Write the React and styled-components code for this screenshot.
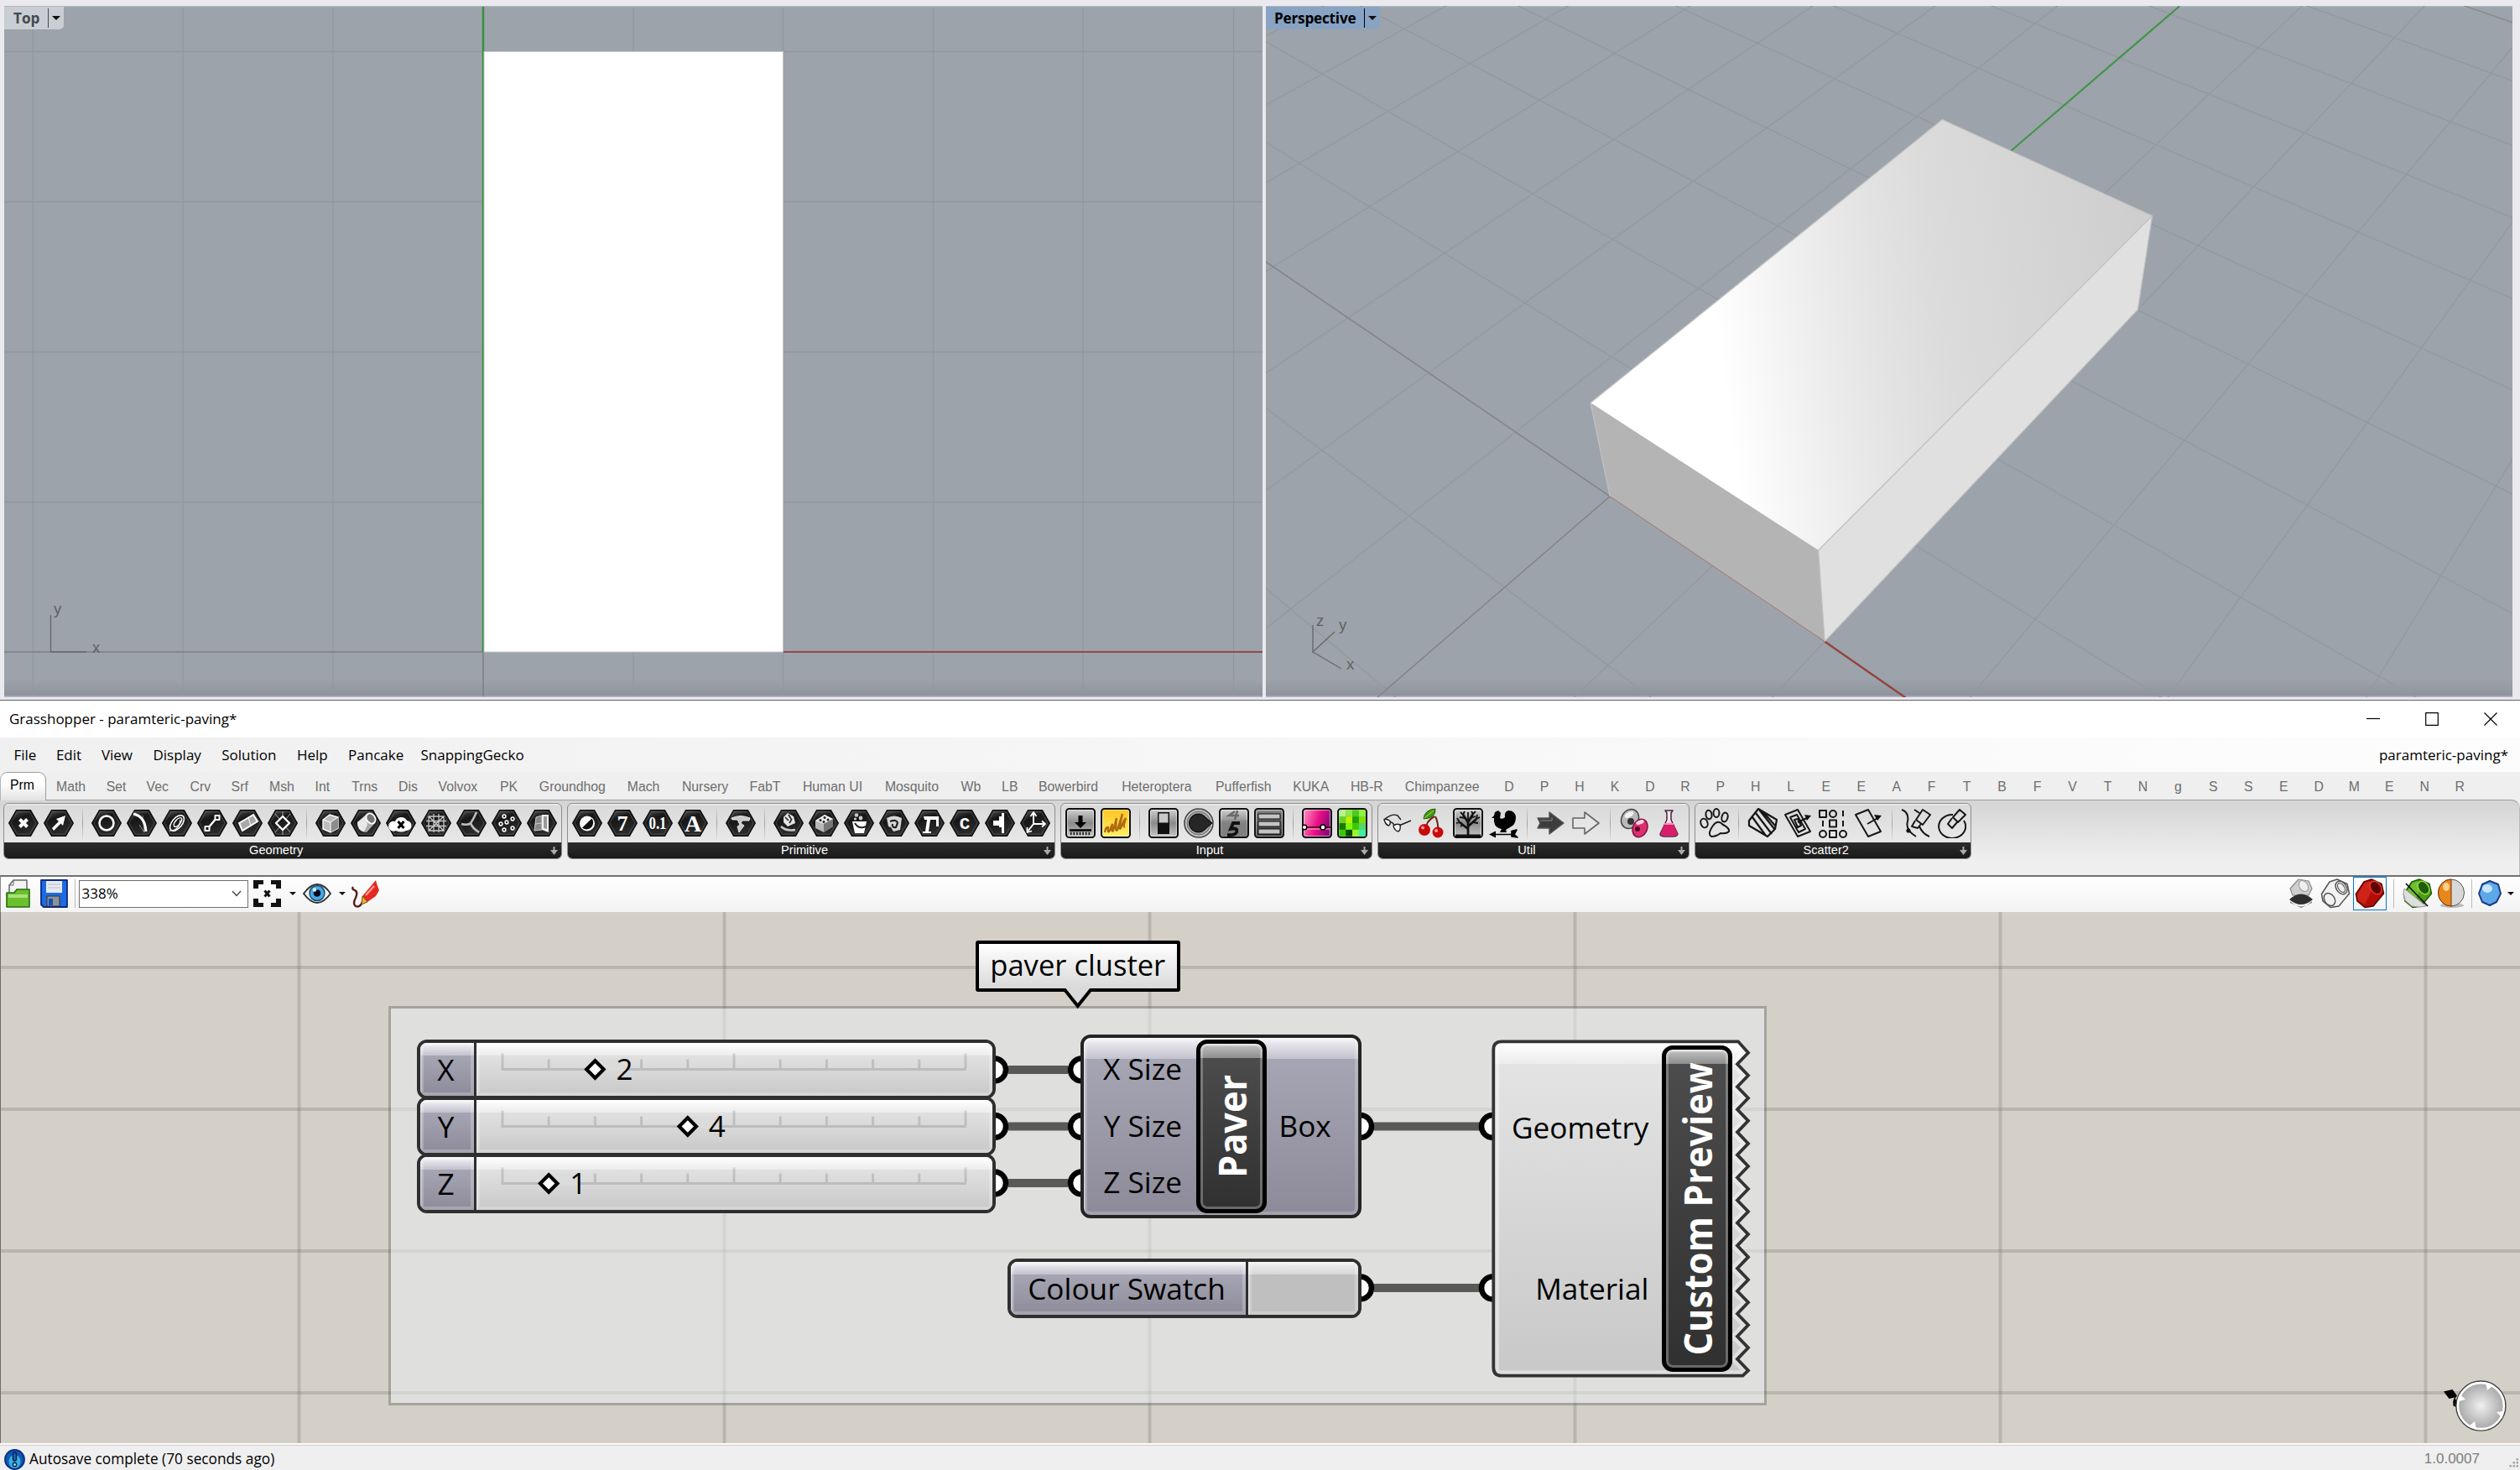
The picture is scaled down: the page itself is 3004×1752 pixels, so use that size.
import React from 'react';
import styled, { createGlobalStyle, css } from 'styled-components';

const UI = '"Open Sans", "Noto Sans", sans-serif';
const ARIAL = '"Liberation Sans", Arial, sans-serif';

const GlobalStyle = createGlobalStyle`
  html, body { margin: 0; padding: 0; }
  body { width: 3004px; height: 1752px; overflow: hidden; background: #efefef; font-family: ${UI}; }
  * { box-sizing: border-box; }
  svg { display: block; }
`;

const Page = styled.div`
  width: 3004px;
  height: 1752px;
  display: flex;
  flex-direction: column;
  overflow: hidden;
`;

/* ---------- Rhino viewports ---------- */
const Viewports = styled.div`
  height: 835px;
  flex: none;
  display: flex;
  gap: 4px;
  padding: 7px 9px 3px 5px;
  background: #e9e9ee;
  border-bottom: 1px solid #5e6063;
`;
const Viewport = styled.div`
  position: relative;
  width: ${(p) => p.$w}px;
  height: 824px;
  overflow: hidden;
  background: linear-gradient(#b9bec8 0, #9da3aa 2px, #9da3aa 802px, #8f949c 822px, #b4b8c4 823px);
`;
const ViewLabel = styled.div`
  position: absolute;
  left: 0;
  top: 1px;
  height: 27px;
  display: flex;
  align-items: center;
  border-radius: 0 0 5px 0;
  background: ${(p) => (p.$active ? '#88a3c3' : '#c9cdd4')};
  color: ${(p) => (p.$active ? '#000' : '#454a4e')};
  font: 700 17.2px/27px ${UI};
  letter-spacing: ${(p) => (p.$active ? '-0.22px' : '0')};
  padding: 0 4px 0 ${(p) => (p.$active ? 10 : 11)}px;
`;
const LabelDivider = styled.span`
  width: 1px;
  height: 23px;
  margin: 0 4px 0 9.5px;
  background: currentColor;
`;
const Caret = styled.span`
  width: 0;
  height: 0;
  border: ${(p) => p.$s || 5}px solid transparent;
  border-top-color: #111;
  border-bottom: 0;
`;
const AxisName = styled.span`
  position: absolute;
  left: ${(p) => p.$x}px;
  top: ${(p) => p.$y}px;
  font: 18.5px/20px ${ARIAL};
  color: #5d6165;
`;

const TopView = () => (
  <Viewport $w={1500}>
    <svg width="1500" height="824" viewBox="5 7 1500 824" fill="none">
      <g stroke="#9298a0" strokeWidth="1.3">
        {[39.5, 218, 397, 755, 933.5, 1112.5, 1291, 1470.5].map((x) => <path key={x} d={`M${x} 9V829`} />)}
        {[61.5, 240.5, 419.5, 598.5].map((y) => <path key={y} d={`M5 ${y}H1505`} />)}
      </g>
      <path d="M5 777H576M576 777V830" stroke="#7c8085" strokeWidth="1.5" />
      <path d="M576 8V777" stroke="#35903f" strokeWidth="2.5" />
      <path d="M933 777H1505" stroke="#93484a" strokeWidth="2.2" />
      <rect x="577" y="61.5" width="356.5" height="715.5" fill="#fff" stroke="#c4c6c9" strokeWidth="1" />
      <path d="M60.5 733V777H103" stroke="#666a6e" strokeWidth="1.4" />
    </svg>
    <ViewLabel>Top<LabelDivider /><Caret /></ViewLabel>
    <AxisName $x={59} $y={709}>y</AxisName>
    <AxisName $x={105} $y={755}>x</AxisName>
  </Viewport>
);

/* Maps a point of the construction plane to the perspective view. */
const project = (u, v) => {
  const a = -1 / 24.08;
  const b = 1 / 18.7;
  const w = 1 + a * u + b * v;
  return [
    (1919.1 - 903.3 * a * u + 4149 * b * v) / w,
    (591.5 - 1325 * a * u - 1327 * b * v) / w,
  ];
};
const line = (p, q) => `M${p[0].toFixed(1)} ${p[1].toFixed(1)}L${q[0].toFixed(1)} ${q[1].toFixed(1)}`;
const GRID = [];
for (let i = -9; i <= 9; i += 1) {
  if (i !== 0) {
    GRID.push(line(project(i, -9.5), project(i, 10)));
    GRID.push(line(project(-10, i), project(9, i)));
  }
}

const PerspectiveView = () => (
  <Viewport $w={1486}>
    <svg width="1486" height="824" viewBox="1509 7 1486 824" fill="none">
      <defs>
        <linearGradient id="topFace" gradientUnits="userSpaceOnUse" x1="2020" y1="400" x2="2560" y2="330">
          <stop offset="0" stopColor="#fff" />
          <stop offset="0.05" stopColor="#fff" />
          <stop offset="0.17" stopColor="#f5f5f5" />
          <stop offset="0.29" stopColor="#ebebeb" />
          <stop offset="0.42" stopColor="#e2e2e2" />
          <stop offset="0.55" stopColor="#dbdbdb" />
          <stop offset="1" stopColor="#cecece" />
        </linearGradient>
      </defs>
      <path d={GRID.join('')} stroke="#9298a0" strokeWidth="1.2" />
      <path d={line(project(-10, 10), project(9, 10))} stroke="#868a90" strokeWidth="1.3" />
      <path d="M1509 312L1919.1 591.5L1642 831" stroke="#84858b" strokeWidth="1.6" />
      <path d="M2397 180L2598 7.5" stroke="#43944a" strokeWidth="2.2" />
      <path d="M2175 764.5L2271.5 831.5" stroke="#93433f" strokeWidth="2.4" />
      <path d="M1896.1 480L2167.6 655.8L2175.2 764.5L1919.1 591.5Z" fill="#b4b4b4" />
      <path d="M2167.6 655.8L2565.6 257.2L2548.3 369.1L2175.2 764.5Z" fill="#e0e0e0" />
      <path d="M2315.3 142.5L2565.6 257.2L2167.6 655.8L1896.1 480Z" fill="url(#topFace)" />
      <path d="M1896.1 480L2315.3 142.5L2565.6 257.2L2167.6 655.8L2175.2 764.5M2565.6 257.2L2548.3 369.1L2175.2 764.5M1896.1 480L1919.1 591.5" stroke="#c0c1c2" strokeWidth="1.3" />
      <path d="M1919.1 591.5L2175.2 764.5" stroke="#a9625c" strokeOpacity=".75" strokeWidth="1" />
      <path d="M1565 745V777L1591 753M1565 777L1599 797" stroke="#666a6e" strokeWidth="1.4" />
    </svg>
    <ViewLabel $active>Perspective<LabelDivider /><Caret /></ViewLabel>
    <AxisName $x={60} $y={723}>z</AxisName>
    <AxisName $x={87} $y={728}>y</AxisName>
    <AxisName $x={96} $y={775}>x</AxisName>
  </Viewport>
);

/* ---------- window chrome ---------- */
const TitleBar = styled.div`
  height: 44px;
  flex: none;
  display: flex;
  align-items: center;
  justify-content: space-between;
  padding: 0 27px 0 11px;
  background: #fff;
  font: 17px/44px ${UI};
  color: #000;
`;
const WindowButtons = styled.div`
  display: flex;
  align-items: center;
  gap: 54px;
`;
const MenuBar = styled.div`
  height: 41px;
  flex: none;
  display: flex;
  align-items: center;
  padding: 1px 14px 0 16.5px;
  background: linear-gradient(90deg, #f0f0f0, #fcfcfc 90%);
  font: 17px/40px ${UI};
  color: #000;
`;
const MenuItem = styled.span`
  width: ${(p) => p.$w}px;
  white-space: nowrap;
`;
const MenuSpacer = styled.span`flex: 1;`;

const TabBar = styled.div`
  height: 33px;
  flex: none;
  display: flex;
  background: #efefef;
`;
const ActiveTab = styled.div`
  width: 55px;
  height: 34px;
  margin-bottom: -1px;
  padding-left: 11px;
  border: 1px solid #9c9c9c;
  border-bottom: 0;
  border-left-color: #b5b5b5;
  border-radius: 9px 9px 0 0;
  background: linear-gradient(#fff 40%, #e2e2e2);
  font: 15.8px/30px ${ARIAL};
  position: relative;
  z-index: 1;
`;
const Tab = styled.span`
  width: ${(p) => p.$w}px;
  text-align: ${(p) => (p.$center ? 'center' : 'left')};
  font: 15.8px/35px ${ARIAL};
  color: #6e6e6e;
  white-space: nowrap;
`;
const TabLead = styled.span`width: 12px;`;

const Ribbon = styled.div`
  height: 90px;
  flex: none;
  padding: 2.5px 3px 0 4px;
  display: flex;
  align-items: flex-start;
  gap: 5.6px;
  border-top: 1.5px solid #9d9d9d;
  border-right: 1.5px solid #b9b9b9;
  border-top-right-radius: 10px;
  background: linear-gradient(#d4d4d4, #efefef 80%);
`;
const Panel = styled.div`
  height: 67px;
  display: flex;
  flex-direction: column;
  border: 1px solid #8d8d8d;
  border-radius: 6px;
  overflow: hidden;
  background: linear-gradient(#f7f7f7 0, #dadada 2px, #e8e8e8 46px);
`;
const PanelIcons = styled.div`
  height: 46px;
  flex: none;
  display: flex;
  align-items: center;
  padding: 0 2.2px;
  svg { margin: 0 3px; }
`;
const PanelSep = styled.span`
  width: 1.2px;
  height: 40px;
  margin: 0 6.9px;
  background: linear-gradient(#d8d8d8, #a4a4a4 50%, #dedede);
`;
const PanelTitle = styled.div`
  flex: 1;
  position: relative;
  padding-right: 16px;
  text-align: center;
  background: linear-gradient(#2c2c2c, #191919);
  color: #fff;
  font: 14.6px/18px ${ARIAL};
  svg { position: absolute; right: 3px; top: 5px; }
`;

/* ---------- toolbar ---------- */
const Toolbar = styled.div`
  height: 44px;
  flex: none;
  display: flex;
  align-items: center;
  padding: 0 3px 2px 6px;
  border-top: 2px solid #717171;
  border-left: 1px solid #8a8a8a;
  background: linear-gradient(#fefefe, #f3f3f3);
`;
const Gap = styled.span`width: ${(p) => p.$w}px; flex: none;`;
const ToolSep = styled.span`width: 1px; height: 34px; background: #bcbcbc;`;
const ZoomBox = styled.div`
  width: 202px;
  height: 33px;
  display: flex;
  align-items: center;
  justify-content: space-between;
  padding: 0 7px 0 3px;
  border: 1px solid #707070;
  background: #fff;
  font: 17px/30px ${UI};
`;
const Pressed = styled.span`
  width: 40px;
  height: 40px;
  display: flex;
  align-items: center;
  justify-content: center;
  border: 1px solid #0078d7;
`;
const ToolSpring = styled.span`flex: 1;`;

/* ---------- canvas ---------- */
const Canvas = styled.div`
  position: relative;
  height: 633px;
  flex: none;
  overflow: hidden;
  background: #d4d0c8;
  border-left: 1px solid #6e6e6e;
`;
const Backdrop = styled.svg`
  position: absolute;
  left: -1px;
  top: 0;
`;
const at = css`
  position: absolute;
  left: ${(p) => p.$x - 1}px;
  top: ${(p) => p.$y - 1087}px;
  width: ${(p) => p.$w}px;
  height: ${(p) => p.$h}px;
`;
const Group = styled.div`
  ${at}
  border: 3.5px solid rgba(92, 94, 92, 0.4);
  background: rgba(231, 237, 238, 0.55);
  background-clip: padding-box;
`;
const SKIN = {
  mauve: ['#f4f3f8', '#c3c2cd', '#a6a5b3', '#8d8b99'],
  silver: ['#ffffff', '#ececec', '#e1e1e1', '#c8c8c8'],
  black: ['#c4c4c4', '#8e8e8e', '#4c4c4c', '#303030'],
  swatch: ['#efefef', '#d8d8d8', '#bfbfbf', '#bfbfbf'],
};
const skin = (name, gloss) => {
  const [a, b, c, d] = SKIN[name];
  return `linear-gradient(${a} 0, ${b} ${gloss}px, ${c} ${gloss}px, ${d} 100%)`;
};
const Capsule = styled.div`
  ${at}
  display: flex;
  border: 4px solid #2f2f2f;
  border-radius: 12px;
  overflow: hidden;
`;
const Cell = styled.div`
  width: ${(p) => (p.$w ? `${p.$w}px` : 'auto')};
  flex: ${(p) => (p.$w ? 'none' : 1)};
  display: flex;
  align-items: center;
  justify-content: center;
  padding: 0 3px 1px 0;
  border-left: ${(p) => (p.$divided ? '3.5px solid #2f2f2f' : '0')};
  background: ${(p) => skin(p.$skin, p.$gloss)};
  box-shadow: inset 0 0 0 4px rgba(255, 255, 255, 0.22), inset 1.5px 1.5px 0 rgba(255, 255, 255, 0.45);
  font: 35.200px/40px ${UI};
  color: #000;
  white-space: nowrap;
`;
const Track = styled.div`
  flex: 1;
  border-left: 3.5px solid #2f2f2f;
  background: ${skin('silver', 15)};
  box-shadow: inset 0 0 0 4px rgba(255, 255, 255, 0.22), inset 1.5px 1.5px 0 rgba(255, 255, 255, 0.45);
`;
const PortColumn = styled.div`
  display: flex;
  flex: none;
  flex-direction: column;
  justify-content: ${(p) => p.$justify || 'center'};
  align-items: flex-end;
  padding: ${(p) => p.$pad};
  font: 35.2px/${(p) => p.$lh}px ${UI};
  color: #000;
  white-space: nowrap;
`;
const ComponentBody = styled.div`
  ${at}
  display: flex;
  border: ${(p) => (p.$bare ? '0' : '4px solid #242424')};
  border-radius: 12px;
  background: ${(p) => (p.$bare ? 'none' : skin('mauve', 25))};
  box-shadow: ${(p) => (p.$bare ? 'none' : 'inset 0 0 0 4px rgba(255,255,255,.2), inset 1.5px 1.5px 0 rgba(255,255,255,.5)')};
`;
const NamePlate = styled.div`
  width: ${(p) => p.$w}px;
  height: ${(p) => p.$h}px;
  margin: ${(p) => p.$m};
  flex: none;
  display: flex;
  align-items: center;
  justify-content: center;
  border: 5px solid #000;
  border-radius: 13px;
  background: ${skin('black', 17)};
  box-shadow: inset 0 0 0 3px rgba(255, 255, 255, 0.28), inset 0 1.5px 0 rgba(255, 255, 255, 0.6);
  span {
    writing-mode: vertical-rl;
    transform: rotate(180deg) scaleY(0.94);
    font: 700 46px/60px ${UI};
    color: #fff;
    white-space: nowrap;
    text-align: center;
  }
`;
const Note = styled.div`
  ${at}
  display: flex;
  align-items: center;
  justify-content: center;
  padding-bottom: 4px;
  border: 4px solid #000;
  border-radius: 3px;
  background: linear-gradient(#fff, #d9d9d9);
  font: 34.6px/50px ${UI};
  color: #000;
`;

const SliderRow = ({ y, label, value }) => {
  const x0 = 600;
  const step = 55.2;
  const knob = x0 + value * step;
  return (
    <Capsule $x={497} $y={y} $w={689.5} $h={71}>
      <Cell $w={64} $skin="mauve" $gloss={15}>{label}</Cell>
      <Track>
        <svg width="614" height="63" viewBox="569 -31.5 614 63">
          <g stroke="#000" strokeOpacity="0.13" strokeWidth="3" fill="none">
            <path d="M598.5 0H1153" />
            {Array.from({ length: 11 }, (_, i) => (
              <path key={i} d={`M${x0 + i * step} ${i % 5 === 0 ? -19 : -12}V-1.5`} />
            ))}
          </g>
          <rect x={knob - 9} y="-12" width="46" height="14" fill="#dbdbdb" />
          <path d={`M${knob} -10.2L${knob + 10.2} 0L${knob} 10.2L${knob - 10.2} 0Z`} fill="#fff" stroke="#000" strokeWidth="4.2" />
          <text x={knob + 25} y="12" fontFamily='"Open Sans", sans-serif' fontSize="35">{value}</text>
        </svg>
      </Track>
    </Capsule>
  );
};

const Grips = ({ points }) => points.map(([x, y]) => (
  <circle key={`${x}-${y}`} cx={x} cy={y} r="13.5" fill="#fff" stroke="#000" strokeWidth="6.5" />
));

const zig = () => {
  let d = 'M1790 1241.3H2072L2084 1254.7';
  for (let i = 0; i < 14; i += 1) {
    const y = 1254.7 + i * 27.05;
    d += `L2071 ${y + 13.5}L2084 ${y + 27.05}`;
  }
  return `${d}L2077.5 1639.7H1790Q1780.3 1639.7 1780.3 1630V1251Q1780.3 1241.3 1790 1241.3Z`;
};

/* ---------- icons ---------- */
const HEX = 'M9.5 2.6H26.5L35.4 18L26.5 33.4H9.5L.6 18Z';
const W = { stroke: '#fff', fill: 'none', strokeWidth: 2, strokeLinejoin: 'round' };
const G = {
  point: <path d="M13.500 13.500L22.500 22.500M22.500 13.500L13.500 22.500" {...W} strokeWidth="4" />,
  vector: <path d="M12 27L10 24L18 16L15 13L26 9L23 21L20.5 18.5Z" fill="#fff" />,
  circle: <circle cx="18" cy="18" r="8.5" {...W} strokeWidth="2.6" />,
  arc: <><path d="M8 7Q22 10 23 28" {...W} strokeWidth="3" /><path d="M15 20L21 29L19 9" {...W} strokeWidth=".8" strokeOpacity=".6" /></>,
  curve: <><ellipse cx="18" cy="18" rx="11" ry="6" transform="rotate(-50 18 18)" {...W} strokeWidth="1.5" /><ellipse cx="19" cy="17" rx="6.5" ry="3" transform="rotate(-50 19 17)" {...W} strokeWidth="1.5" /><path d="M9 27Q21 27 22 14" {...W} strokeWidth="1.2" /></>,
  line: <><path d="M13 24L23 12" {...W} strokeWidth="2.4" /><path d="M9.5 22h5v5h-5zM21.500 9h5v5h-5z" {...W} fill="#111" /></>,
  plane: <><path d="M8 18L25 8L30 16L12 27Z" fill="#a9a9a9" stroke="#fff" strokeWidth="2" /><path d="M19 11.500L22 21" stroke="#fff" /></>,
  mesh2: <><path d="M18 10L26 18L18 26L10 18Z" {...W} strokeWidth="2.4" /><path d="M9 7L14 13M27 7L22 13M9 29L14 23M27 29L22 23M18 4V9M18 27V32" stroke="#aaa" /></>,
  box: <><path d="M9 14L17 8L27 11V24L18 29L9 25Z" fill="#bdbdbd" stroke="#fff" strokeWidth="1.400" /><path d="M18 17L27 11V24L18 29Z" fill="#8d8d8d" /><path d="M9 14L18 17L27 11M18 17V29" stroke="#fff" fill="none" /></>,
  tube: <><path d="M8 17L19 7Q29 9 29 18L19 29Q8 28 8 17Z" fill="#a9a9a9" /><path d="M8 17L18 9L20 20L16 28.500Q8 27 8 17Z" fill="#e8e8e8" /><ellipse cx="24" cy="12.500" rx="5" ry="6.500" transform="rotate(-35 24 12.500)" fill="#777" stroke="#fff" strokeWidth="1.800" /></>,
  cloud: <><path d="M12 27A6 6 0 1 1 11 16A7.500 7 0 0 1 25 15A6 6 0 1 1 24 27Q18 30 12 27Z" fill="#fff" /><path d="M14.500 16L21.500 24M21.500 16L14.500 24" stroke="#000" strokeWidth="3" /></>,
  mesh: <><path d="M9 10H27V27H9ZM15 7V29M21 7V29M6 15.500H30M6 21.500H30M9 10L27 27M27 10L9 27" {...W} strokeWidth="1.300" strokeOpacity=".75" /></>,
  subd: <path d="M6 19Q14 21 17 18Q20 14 24 5M17 18Q19 24 27 29" {...W} strokeWidth="2.600" strokeOpacity=".7" />,
  field: <g {...W} strokeWidth="1.500">{[[15, 10], [25, 13], [11, 19], [18, 17], [25, 24], [15, 26]].map(([x, y]) => <circle key={`${x}${y}`} cx={x} cy={y} r="1.900" />)}</g>,
  brep: <><path d="M9 27L11 11L18 9V26Z" fill="#888" stroke="#ccc" /><path d="M18 8H26V29L18 26Z" fill="#eee" /><path d="M10 19L18 18" stroke="#ccc" /><path d="M20 10H24V25L20 24Z" fill="#999" /></>,
  bool: <><circle cx="18" cy="18.500" r="9" fill="#fff" /><path d="M23.500 12.500A8 8 0 0 1 12 23.500Z" fill="#111" /></>,
  pulse: <path d="M7 12Q18 7 29 12L28 15H20L18 18L22 21L16 29L14 22L17 20L14 14H8Z" fill="#c9c9c9" stroke="#fff" strokeWidth=".8" />,
  guid: <><path d="M12 11L17 6L24 10L26 18L17 22L12 17Z" fill="#e4e4e4" /><path d="M14 11L18 15M18 8L21 13M22 13L19 18" stroke="#222" strokeWidth="1.600" /><path d="M9 22Q15 28 26 26" {...W} strokeWidth="2.600" strokeOpacity=".75" /></>,
  dice: <><path d="M8 15L19 8L29 13V22L18 29L8 24Z" fill="#b8b8b8" /><path d="M8 15L19 8L29 13L18 19Z" fill="#eee" /><path d="M18 19L29 13V22L18 29Z" fill="#777" /><g fill="#222"><circle cx="14" cy="14.500" r="1.500" /><circle cx="19" cy="11.500" r="1.500" /><circle cx="23" cy="14" r="1.500" /><circle cx="18" cy="16.500" r="1.500" /></g></>,
  bucket: <><path d="M10 16H27L24 30H13Z" fill="#fff" /><path d="M13 18Q18 26 26 22" stroke="#222" strokeWidth="2" fill="none" /><g fill="#ccc"><circle cx="15" cy="8.500" r="2.200" /><circle cx="20" cy="12" r="2.400" /><circle cx="13.500" cy="13" r="1.600" /></g></>,
  path: <><path d="M9 12Q18 7 27 12L25 26L17 28L14 23L11 22Z" fill="#d6d6d6" /><path d="M13 16Q21 13 22 18L20 23Q15 24 16 19" stroke="#222" strokeWidth="2.200" fill="none" /></>,
  shader: <path d="M11 10H29V22H26V14H19L17 28H20V30H10V28H13L15 14H12Z" fill="#fff" />,
  transform: <path d="M10 15H17V10H20V6H23V30H20V23H17V21H10Z" fill="#fff" />,
  axes: <><path d="M16 6V19L9 28M16 19H29" {...W} /><path d="M12.500 10L16 5L19.500 10M26 15.500L30 19L26 22.500M8.500 23V29L14 27.500" {...W} strokeWidth="1.800" /></>,
};
const LETTER = { seven: ['7', 26, 26.5], num: ['0.1', 21, 25], text: ['A', 28, 27.5], cult: ['C', 21, 25] };

const Hex = ({ g }) => (
  <svg width="36" height="36" viewBox="0 0 36 36">
    <defs>
      <linearGradient id="hexFill" x1="0" y1="0" x2=".4" y2="1">
        <stop offset="0" stopColor="#585858" /><stop offset=".4" stopColor="#161616" /><stop offset="1" stopColor="#2c2c2c" />
      </linearGradient>
    </defs>
    <path d={HEX} fill="url(#hexFill)" stroke="#0b0b0b" strokeWidth="1.200" strokeLinejoin="round" />
    <path d="M10.600 4.800H25.400L33 18L25.400 31.200H10.600L3 18Z" fill="none" stroke="#777" strokeOpacity=".45" strokeWidth="1" />
    {G[g]}
    {LETTER[g] && (
      <text
        x="18" y={LETTER[g][2]} textAnchor="middle" fill="#fff" fontSize={LETTER[g][1]} fontWeight="700"
        fontFamily={g === 'cult' ? '"Liberation Mono", monospace' : '"Liberation Serif", serif'}
        textLength={g === 'num' ? 21 : undefined} lengthAdjust="spacingAndGlyphs"
      >
        {LETTER[g][0]}
      </text>
    )}
  </svg>
);

const Square = ({ fill = 'url(#sqFill)', children }) => (
  <svg width="36" height="36" viewBox="0 0 36 36">
    <defs>
      <linearGradient id="sqFill" x1="0" y1="0" x2="0" y2="1"><stop offset="0" stopColor="#d2d2d2" /><stop offset=".5" stopColor="#8a8a8a" /><stop offset="1" stopColor="#c8c8c8" /></linearGradient>
      <linearGradient id="goldFill" x1="0" y1="0" x2="0" y2="1"><stop offset="0" stopColor="#ffc21e" /><stop offset="1" stopColor="#fff26a" /></linearGradient>
      <linearGradient id="pinkFill" x1="0" y1="0" x2="1" y2=".3"><stop offset="0" stopColor="#ff9cc8" /><stop offset=".6" stopColor="#ec0e86" /><stop offset="1" stopColor="#8c0a78" /></linearGradient>
      <linearGradient id="darkFill" x1="0" y1="0" x2="0" y2="1"><stop offset="0" stopColor="#8a8a8a" /><stop offset="1" stopColor="#2a2a2a" /></linearGradient>
    </defs>
    <rect x="1" y="1" width="34" height="34" rx="3.500" fill={fill} stroke="#111" strokeWidth="2" />
    <rect x="2.600" y="2.600" width="30.800" height="30.800" rx="2" fill="none" stroke="#fff" strokeOpacity=".55" />
    {children}
  </svg>
);

const Svg = ({ children, w = 36, h = 36 }) => <svg width={w} height={h} viewBox={`0 0 ${w} ${h}`} fill="none" strokeLinejoin="round">{children}</svg>;

const GREENS = ['#b6f28a', '#8fe848', '#4fc81e', '#8cf23c', '#6ad028', '#bdf000', '#1fa004', '#7fe000', '#1c7a04', '#7dfa10', '#42c800', '#52d86a', '#38c800', '#084a04', '#9cf42a', '#3af0a8'];

const INPUT = {
  import: <Square><path d="M15.500 9h5v8h4.500L18 24L11 17h4.500z" fill="#000" /><path d="M5 26.500H31" stroke="#000" strokeWidth="2.500" /><path d="M6 30.500H31" stroke="#000" strokeWidth="3.500" strokeDasharray="1.400 2.200" /></Square>,
  graph: <Square fill="url(#goldFill)"><path d="M5 29Q6 22 9 23Q8 31 11 27L14 19Q13 30 15 27L19 12Q17 30 20 26L26 7Q21 28 24 24Q27 16 30 12Q26 24 29 22" fill="none" stroke="#b06a10" strokeWidth="2.400" /></Square>,
  toggle: <Square><rect x="11" y="5" width="14" height="26" fill="#111" /><rect x="12.500" y="6.500" width="11" height="11" fill="#c9c9c9" /></Square>,
  knob: <Svg><circle cx="18" cy="18" r="17" fill="#c4c4c4" stroke="#444" strokeWidth="1.600" /><circle cx="18" cy="18" r="14" fill="#a2a2a2" stroke="#6c6c6c" /><path d="M26 11A11 11 0 1 0 26 25L34 18Z" fill="#262626" stroke="#000" /></Svg>,
  scroller: <Square><rect x="2" y="14" width="32" height="20" fill="url(#darkFill)" opacity=".45" /><path d="M19 4L12 9H24M22 3L19 14" stroke="#6a6a6a" strokeWidth="2.600" fill="none" /><path d="M25 18H17L14 25Q23 23 21 29Q19 33 10 32" stroke="#111" strokeWidth="3.800" fill="none" /></Square>,
  list: <Square fill="url(#darkFill)"><g fill="#c4c4c4" stroke="#111"><rect x="5" y="7" width="26" height="6" /><rect x="5" y="16" width="26" height="6" /><rect x="5" y="25" width="26" height="6" /></g></Square>,
  gradient: <Square fill="url(#pinkFill)"><path d="M2 23H34" stroke="#300" strokeWidth="1.500" /><path d="M2 25H34" stroke="#ffb2da" /><circle cx="3" cy="23" r="2.800" fill="#fff" stroke="#000" strokeWidth="1.400" /><circle cx="25" cy="23" r="3" fill="#fff" stroke="#000" strokeWidth="1.600" /></Square>,
  pixels: <Square fill="#4c4">{GREENS.map((c, i) => <rect key={c} x={2.5 + (i % 4) * 7.8} y={2.500 + Math.floor(i / 4) * 7.800} width="7.800" height="7.800" fill={c} />)}</Square>,
};

const UTIL = {
  glasses: <Svg><g stroke="#1d1d1d" strokeWidth="1.400" fill="#f8f8f8"><path d="M2 13.500Q5 12.500 9 15.500Q10 20 7 21Q3 19 2 13.500Z" /><path d="M13 21Q17 18 21 20Q22 26 19 28Q14 27 13 21Z" /><path d="M9 16.500Q12 17 14 20M21 20.500L34 15M3 13Q12 6 18 9L22 14" fill="none" /></g></Svg>,
  cherries: <Svg><path d="M20 10Q9 16 10 26M21 10Q25 18 24 28" stroke="#6b2414" strokeWidth="2" /><path d="M7 13Q8 2 21 1Q22 12 7 13Z" fill="#3f9a10" stroke="#225a06" /><path d="M8 12L19 3" stroke="#b4e060" /><circle cx="8" cy="26" r="7" fill="#c80a0a" /><circle cx="24" cy="29" r="6.500" fill="#c80a0a" /><circle cx="6" cy="23.500" r="2" fill="#ff9a9a" /><circle cx="22" cy="27" r="2" fill="#ff9a9a" /></Svg>,
  tree: <Square><path d="M3 33H33M18 33V17M18 25L8 17M18 22L28 13M18 17L12 8M18 17L24 7" stroke="#111" strokeWidth="2.800" fill="none" /><path d="M8 17L5 12M8 17L4 18M28 13L32 11M28 13L29 8M12 8L9 5M12 8L14 4M24 7L22 4M24 7L27 4M12 20L9 22M24 17L30 18M15 12L8 11M21 12L27 10M18 14V5" stroke="#111" strokeWidth="1.800" /></Square>,
  rooster: <Svg><path d="M4 12L7 9L8 5L12 3L15 6L14 12Q17 14 20 11Q19 4 24 3Q32 3 33 11Q33 20 26 23L21 26L22 29H14L16 25Q8 24 7 16L7 12Z" fill="#000" /><path d="M1 31.500L9 27.500V35.500Z" fill="#000" /><path d="M4 31.500H30M28 27.500L34 26L31 31.500L35 35L28 34Z" stroke="#000" strokeWidth="1.600" fill="#000" /></Svg>,
  arrowDark: <Svg><path d="M2 12H16V5L33 18L16 31V24H2L5 18Z" fill="#3c3c3c" stroke="#555" strokeWidth="1.500" /><path d="M5 15H19V11" stroke="#888" /></Svg>,
  arrowLight: <Svg><path d="M2 12H16V5L33 18L16 31V24H2Z" fill="#e6e6e6" stroke="#666" strokeWidth="1.600" /></Svg>,
  jelly: <Svg><ellipse cx="13" cy="13" rx="10" ry="12" transform="rotate(30 13 13)" fill="#b9b9b9" stroke="#444" strokeWidth="1.500" /><circle cx="14" cy="16" r="4" fill="#333" /><ellipse cx="12" cy="8" rx="6" ry="3" transform="rotate(-30 12 8)" fill="#f4f4f4" /><ellipse cx="25" cy="24" rx="8.500" ry="11" transform="rotate(25 25 24)" fill="#dc2f72" stroke="#82133f" strokeWidth="1.500" /><circle cx="22" cy="25" r="3" fill="#5e0528" /><ellipse cx="25" cy="17" rx="5" ry="2.500" transform="rotate(-20 25 17)" fill="#ffd3e2" /></Svg>,
  flask: <Svg><path d="M13 3H22L20 6V14L28 31Q27 34 22 34H13Q7 34 7 31L15 14V6Z" fill="#f4e3ea" stroke="#46233a" strokeWidth="1.500" /><path d="M12 19H23L28 31Q27 33.500 22 33.500H13Q7.500 33.500 7.500 31Z" fill="#d81e6a" /><path d="M12 19H23" stroke="#ff86b4" strokeWidth="2" /></Svg>,
};
const K = { stroke: '#161616', strokeWidth: 2, fill: 'none' };
const SCATTER = {
  paw: <Svg><g {...K}><ellipse cx="5.500" cy="18" rx="4" ry="5.500" transform="rotate(-20 5.500 18)" /><ellipse cx="11" cy="8" rx="3.500" ry="5.200" transform="rotate(-8 11 8)" /><ellipse cx="20" cy="6" rx="3.500" ry="5" /><ellipse cx="30" cy="11" rx="3.500" ry="5.500" transform="rotate(15 30 11)" /><path d="M16 21Q22 13 28 20Q36 24 35 28Q32 31 25 30Q20 34 14 34Q9 31 16 21Z" /></g></Svg>,
  hatch: <Svg><path d="M13 1L35 14L33 25L24 34L2 21V15ZM6 11L22 33M10 6L29 31M14 2L33 26M18 4L34 22" {...K} strokeWidth="2.200" /></Svg>,
  nested: <Svg><path d="M3 8L18 2L33 28L18 34ZM9 11L17 8L27 25L19 29ZM14 14L18 13L22 21L18 23Z" {...K} /><path d="M18 17L31 11" {...K} /><path d="M26 8L34 9L29 15Z" fill="#111" /></Svg>,
  shapes: <Svg><g {...K}><path d="M2 3h8v8h-8zM14 14.500h8v8h-8zM14 27h8v8h-8zM30 3V10M6 15V22M30 15V22" /><circle cx="18" cy="7" r="4" /><circle cx="6" cy="31" r="4" /><circle cx="30" cy="31" r="4" /></g></Svg>,
  rect: <Svg><path d="M3 8L18 2L33 28L18 34Z" {...K} /><path d="M17 19L31 11" {...K} /><path d="M25 8L34 9L29 15Z" fill="#111" /></Svg>,
  curvePen: <Svg><path d="M1 2Q10 5 8 16Q5 26 18 34M16 2L22 6M22 22Q26 31 34 34M26 2L35 8L26 20L18 14ZM17 15L13 22L20 24L24 19" {...K} /><circle cx="9" cy="27" r="2.600" fill="#111" /></Svg>,
  circlePen: <Svg><path d="M33 15A16 14 0 1 1 20 8M28 2L35 8L26 17L20 11ZM19 12L14 19L19 24L25 17" {...K} /></Svg>,
};

const Icon = ({ name }) => {
  const special = INPUT[name] || UTIL[name] || SCATTER[name];
  return special || <Hex g={name} />;
};

const PANELS = [
  ['Geometry', ['point', 'vector', '|', 'circle', 'arc', 'curve', 'line', 'plane', 'mesh2', '|', 'box', 'tube', 'cloud', 'mesh', 'subd', 'field', 'brep']],
  ['Primitive', ['bool', 'seven', 'num', 'text', '|', 'pulse', '|', 'guid', 'dice', 'bucket', 'path', 'shader', 'cult', 'transform', 'axes']],
  ['Input', ['import', 'graph', '|', 'toggle', 'knob', 'scroller', 'list', '|', 'gradient', 'pixels']],
  ['Util', ['glasses', 'cherries', 'tree', 'rooster', '|', 'arrowDark', 'arrowLight', '|', 'jelly', 'flask']],
  ['Scatter2', ['paw', '|', 'hatch', 'nested', 'shapes', 'rect', '|', 'curvePen', 'circlePen']],
];

const TABS = [
  ['Math', 67.4], ['Set', 127.2], ['Vec', 175], ['Crv', 227], ['Srf', 276], ['Msh', 321.4], ['Int', 376], ['Trns', 419.6],
  ['Dis', 475.4], ['Volvox', 523], ['PK', 596.4], ['Groundhog', 643.3], ['Mach', 748.2], ['Nursery', 813.4], ['FabT', 894],
  ['Human UI', 957.4], ['Mosquito', 1055.4], ['Wb', 1146], ['LB', 1194.6], ['Bowerbird', 1238.5], ['Heteroptera', 1337.7],
  ['Pufferfish', 1449.6], ['KUKA', 1541.7], ['HB-R', 1610.5], ['Chimpanzee', 1675.4], ['', 1778.6],
];
const SHORT_TABS = 'DPHKDRPHLEEAFTBFVTNgSSEDMENR'.split('');
const MENU = [['File', 50.4], ['Edit', 54], ['View', 61.6], ['Display', 81.7], ['Solution', 89.8], ['Help', 61.1], ['Pancake', 86.400], ['SnappingGecko', 130]];

const Tube = ({ light, dark, mid, wire, half }) => (
  <Svg w={36} h={36}>
    <path d="M1.500 18.500L11 4L20 1L32 6.500L34.500 18L22 33L12 34.500L3 27Z" fill={mid} stroke={wire || dark} strokeWidth="1.500" />
    {!wire && <path d="M3 19L12 5L18 3L20 15L12 31L4 26Z" fill={light} opacity=".5" />}
    <ellipse cx="25" cy="11" rx="6" ry="8.500" transform="rotate(-35 25 11)" fill={wire ? '#eee' : dark} stroke={wire || light} strokeWidth="1.500" />
    {wire && <ellipse cx="11" cy="25" rx="6" ry="8" transform="rotate(-35 11 25)" stroke={wire} strokeWidth="1.500" />}
    {wire && <ellipse cx="25" cy="11" rx="3.500" ry="6" transform="rotate(-35 25 11)" stroke={wire} strokeWidth="1.200" />}
    {half && <><path d="M2 12L28 33L20 34L11 33L3 26L1 18Z" fill="#dedede" stroke="#9a9a9a" /><path d="M4 6L30 33" stroke="#111" strokeWidth="1.800" /></>}
  </Svg>
);

const StatusBar = styled.div`
  height: 32px;
  flex: none;
  display: flex;
  align-items: center;
  padding: 4px 1px 0 5px;
  border-top: 2px solid #fafafa;
  background: linear-gradient(#d0d0d0 0, #d0d0d0 1px, #efefef 1px);
  svg:last-child { align-self: flex-end; margin-bottom: 2px; }
`;
const StatusText = styled.span`
  flex: 1;
  padding-left: 5px;
  font: 17.250px/24px ${UI};
  color: #000;
`;
const Version = styled.span`
  margin-right: 35px;
  font: 17px/24px ${ARIAL};
  color: #7c7c7c;
`;

export default function App() {
  return (
    <Page>
      <GlobalStyle />
      <Viewports>
        <TopView />
        <PerspectiveView />
      </Viewports>

      <TitleBar>
        <span>Grasshopper - paramteric-paving*</span>
        <WindowButtons>
          <Svg w={16} h={16}><path d="M0 7.500H16" stroke="#000" strokeWidth="1.200" /></Svg>
          <Svg w={16} h={16}><rect x=".7" y=".7" width="14.600" height="14.600" stroke="#000" strokeWidth="1.200" /></Svg>
          <Svg w={16} h={16}><path d="M.5 .5L15.500 15.500M15.500 .5L.5 15.500" stroke="#000" strokeWidth="1.200" /></Svg>
        </WindowButtons>
      </TitleBar>

      <MenuBar>
        {MENU.map(([t, w]) => <MenuItem key={t} $w={w}>{t}</MenuItem>)}
        <MenuSpacer />
        <span>paramteric-paving*</span>
      </MenuBar>

      <TabBar>
        <ActiveTab>Prm</ActiveTab>
        <TabLead />
        {TABS.slice(0, -1).map(([t, x], i) => <Tab key={t} $w={TABS[i + 1][1] - x}>{t}</Tab>)}
        {SHORT_TABS.map((t, i) => <Tab key={i} $w={41.98} $center>{t}</Tab>)}
      </TabBar>

      <Ribbon>
        {PANELS.map(([title, items]) => (
          <Panel key={title}>
            <PanelIcons>
              {items.map((n, i) => (n === '|' ? <PanelSep key={i} /> : <Icon key={i} name={n} />))}
            </PanelIcons>
            <PanelTitle>
              {title}
              <svg width="11" height="11" viewBox="0 0 11 11"><path d="M4.500 0h2v4H10L5.500 10L1 4H4.500z" fill="#aaa" /></svg>
            </PanelTitle>
          </Panel>
        ))}
      </Ribbon>

      <Toolbar>
        <Svg w={30} h={34}>
          <path d="M4 17V7L9 1H25V17" fill="#f4f4f4" stroke="#666" strokeWidth="1.500" /><path d="M4 7H9V1" stroke="#666" />
          <path d="M1 16H10L13 12H28V33H1Z" fill="#6cbf2e" stroke="#24700c" strokeWidth="1.600" /><path d="M3 18H26V22H3Z" fill="#a8e27a" />
        </Svg>
        <Gap $w={10.5} />
        <Svg w={33} h={34}>
          <path d="M1 1H32V33H4L1 30Z" fill="#1e6ae0" stroke="#0b2a80" strokeWidth="1.800" /><rect x="7" y="2" width="19" height="14" fill="#e4eaf0" /><path d="M9 6H24M9 10H24" stroke="#b8c0c8" />
          <rect x="8" y="20" width="15" height="12" fill="#8b929a" stroke="#333" /><rect x="10" y="23" width="5" height="8" fill="#1450b8" />
        </Svg>
        <Gap $w={8} /><ToolSep /><Gap $w={4} />
        <ZoomBox>
          338%
          <Svg w={12} h={8}><path d="M1 1L6 6.500L11 1" stroke="#444" strokeWidth="1.300" /></Svg>
        </ZoomBox>
        <Gap $w={5} />
        <Svg w={35} h={34}>
          <path d="M1 11V1H13V6H7V11ZM22 1H34V11H28V6H22ZM1 23V33H13V28H7V23ZM34 23V33H22V28H28V23Z" fill="#111" />
          <path d="M14.500 13.500L20.500 20.500M20.500 13.500L14.500 20.500" stroke="#111" strokeWidth="3" />
        </Svg>
        <Gap $w={9} /><Caret $s={4} /><Gap $w={8} />
        <Svg w={34} h={34}>
          <path d="M1 17Q9 6 17 6Q26 6 33 17Q25 28 17 28Q9 28 1 17Z" fill="#f3f6f8" stroke="#333" strokeWidth="2" />
          <circle cx="17" cy="16.500" r="9" fill="#4aa8e0" stroke="#155080" strokeWidth="1.500" /><circle cx="17" cy="16.500" r="4.300" fill="#050a20" /><circle cx="14" cy="12.500" r="2.200" fill="#dff4ff" />
        </Svg>
        <Gap $w={9} /><Caret $s={4} /><Gap $w={6} />
        <Svg w={34} h={34}>
          <path d="M3 9Q1 12 5 13Q9 15 6 22Q2 29 6 32Q11 34 14 27" stroke="#5a1b16" strokeWidth="2.400" />
          <path d="M14 20L30 1Q31 6 34 13L30 20L20 27Z" fill="#e32a22" /><path d="M18 19L28 8" stroke="#ff9a90" strokeWidth="2.500" /><path d="M14 20L20 27L13 30Z" fill="#e9b13a" stroke="#7c500c" />
        </Svg>
        <ToolSpring />
        <Svg w={30} h={36}>
          <path d="M2 12L12 1L24 3L28 12L24 20H5Z" fill="#cfcfcf" stroke="#8b8b8b" strokeWidth="1.200" /><ellipse cx="18" cy="9" rx="5" ry="7" transform="rotate(-30 18 9)" fill="#eee" stroke="#999" />
          <path d="M1 25Q15 12 29 25Q15 37 1 25Z" fill="#2e2e2e" /><path d="M2 27Q15 40 28 27V29L15 35L2 29Z" fill="#777" />
        </Svg>
        <Gap $w={8.5} />
        <Tube mid="#f2f2f2" light="#fff" dark="#999" wire="#555" />
        <Gap $w={3} />
        <Pressed><Tube mid="#b30d08" light="#e8392a" dark="#5e0402" /></Pressed>
        <Gap $w={8} /><ToolSep /><Gap $w={9.5} />
        <Tube mid="#4d9e16" light="#8fe04a" dark="#215c04" half />
        <Gap $w={5} />
        <Svg w={34} h={36}>
          <ellipse cx="18" cy="32" rx="14" ry="3" fill="#bbb" /><ellipse cx="17" cy="17" rx="15.500" ry="16" fill="#d8d8d8" stroke="#555" />
          <path d="M17 1A15.500 16 0 0 0 17 33Z" fill="#e8861c" stroke="#7c3208" /><ellipse cx="11" cy="10" rx="4" ry="5" fill="#ffd08a" />
        </Svg>
        <Gap $w={7} /><ToolSep /><Gap $w={7} />
        <Svg w={28} h={34}>
          <path d="M14 2L24 6L27 17L22 27L14 31L5 27L1 17L5 6Z" fill="#5fa8e8" stroke="#1a3c8c" strokeWidth="2" /><ellipse cx="11" cy="11" rx="6" ry="5" fill="#c4e6ff" />
        </Svg>
        <Gap $w={7} /><Caret $s={4} /><Gap $w={4.5} />
      </Toolbar>

      <Canvas>
        <Backdrop width="3004" height="633" viewBox="0 1087 3004 633" fill="none">
          <g stroke="#68695f" strokeOpacity="0.25" strokeWidth="4">
            {[356.5, 863.5, 1370.500, 1877.5, 2384.5, 2891.5].map((x) => <path key={x} d={`M${x} 1087V1720`} />)}
            {[1153, 1322, 1491, 1660].map((y) => <path key={y} d={`M0 ${y}H3004`} />)}
          </g>
        </Backdrop>
        <Group $x={463} $y={1199} $w={1643} $h={476} />
        <Backdrop width="3004" height="633" viewBox="0 1087 3004 633" fill="none">
          <defs>
            <linearGradient id="silver" x1="0" y1="0" x2="0" y2="1">
              <stop offset="0" stopColor="#fff" /><stop offset=".068" stopColor="#ececec" /><stop offset=".068" stopColor="#e3e3e3" /><stop offset="1" stopColor="#c8c8c8" />
            </linearGradient>
            <clipPath id="zigClip"><path d={zig()} /></clipPath>
          </defs>
          <path d="M1202 1275H1273M1202 1342.500H1273M1202 1410H1273M1638 1342.500H1764M1638 1535H1764" stroke="#595957" strokeWidth="10" />
          <Grips points={[[1185.5, 1275], [1185.5, 1342.5], [1185.5, 1410], [1289.5, 1275], [1289.5, 1342.5], [1289.5, 1410], [1621.5, 1342.5], [1621.5, 1535], [1779.500, 1342.500], [1779.500, 1535]]} />
          <path d={zig()} fill="url(#silver)" />
          <path d={zig()} stroke="#fff" strokeOpacity=".4" strokeWidth="13" clipPath="url(#zigClip)" />
          <path d={zig()} stroke="#333" strokeWidth="3.800" />
        </Backdrop>

        <SliderRow y={1239} label="X" value={2} />
        <SliderRow y={1307} label="Y" value={4} />
        <SliderRow y={1374.500} label="Z" value={1} />

        <ComponentBody $x={1288} $y={1233} $w={335} $h={219}>
          <PortColumn $pad="0 0 2px 23px" $lh={67.5}>
            <span>X Size</span><span>Y Size</span><span>Z Size</span>
          </PortColumn>
          <NamePlate $w={84} $h={207} $m="2px 0 0 17.5px"><span>Paver</span></NamePlate>
          <PortColumn $pad="0 0 2px 14px" $lh={67.5}><span>Box</span></PortColumn>
        </ComponentBody>

        <Capsule $x={1200.5} $y={1500} $w={422} $h={70.5}>
          <Cell $w={280} $skin="mauve" $gloss={15}>Colour Swatch</Cell>
          <Cell $skin="swatch" $gloss={15} $divided />
        </Capsule>

        <ComponentBody $bare $x={1778} $y={1239} $w={308} $h={402}>
          <PortColumn $pad="84px 16px 86px 24px" $lh={40} $justify="space-between">
            <span>Geometry</span><span>Material</span>
          </PortColumn>
          <NamePlate $w={84} $h={389} $m="7px 0 0 0"><span>Custom Preview</span></NamePlate>
        </ComponentBody>

        <Note $x={1163} $y={1121} $w={243.500} $h={61}>paver cluster</Note>
        <Backdrop width="3004" height="633" viewBox="0 1087 3004 633" fill="none">
          <path d="M1269 1176V1180L1284.700 1199L1300.500 1180V1176Z" fill="#dadada" />
          <path d="M1267 1180H1269.500L1284.700 1199L1300 1180H1303" stroke="#000" strokeWidth="4" />
          <defs>
            <radialGradient id="compass"><stop offset="0" stopColor="#f0f0f0" /><stop offset="1" stopColor="#a3a3a3" /></radialGradient>
          </defs>
          <path d="M2913 1658.500L2923.500 1656L2929 1663.500L2926.500 1667Q2931 1670 2928 1677L2924.500 1675.500Q2923.500 1669 2926 1665.500L2919.500 1667Z" fill="#000" />
          <circle cx="2957.400" cy="1675.600" r="29.500" fill="url(#compass)" stroke="#444" strokeWidth="1.500" />
          <circle cx="2957.400" cy="1675.600" r="27.500" stroke="#fff" strokeWidth="2.600" />
          <path d="M2963 1648L2972 1651L2965 1657ZM2984 1682L2976 1683L2983 1690ZM2952 1703L2943 1700L2950 1694ZM2931 1670L2939 1668L2932 1661Z" fill="#fff" />
        </Backdrop>
      </Canvas>

      <StatusBar>
        <Svg w={25} h={25}>
          <circle cx="12.500" cy="12.500" r="11.500" fill="#0f58b4" stroke="#0a2c84" strokeWidth="1.800" /><ellipse cx="12.500" cy="15" rx="7" ry="8" fill="#38b0e0" />
          <rect x="10.500" y="4" width="4" height="10" rx="2" fill="#1d64b8" stroke="#062050" strokeWidth="1.400" /><circle cx="12.500" cy="18.500" r="2.200" fill="#9fe4ff" stroke="#062050" strokeWidth="1.400" />
        </Svg>
        <StatusText>Autosave complete (70 seconds ago)</StatusText>
        <Version>1.0.0007</Version>
        <Svg w={12} h={12}><g fill="#a6a6a6"><path d="M8.500 0h2.500v2.500H8.500zM4.500 4h2.500v2.500H4.500zM8.500 4h2.500v2.500H8.500zM.5 8h2.500v2.500H.5zM4.500 8h2.500v2.500H4.500zM8.500 8h2.500v2.500H8.500z" /></g></Svg>
      </StatusBar>
    </Page>
  );
}
